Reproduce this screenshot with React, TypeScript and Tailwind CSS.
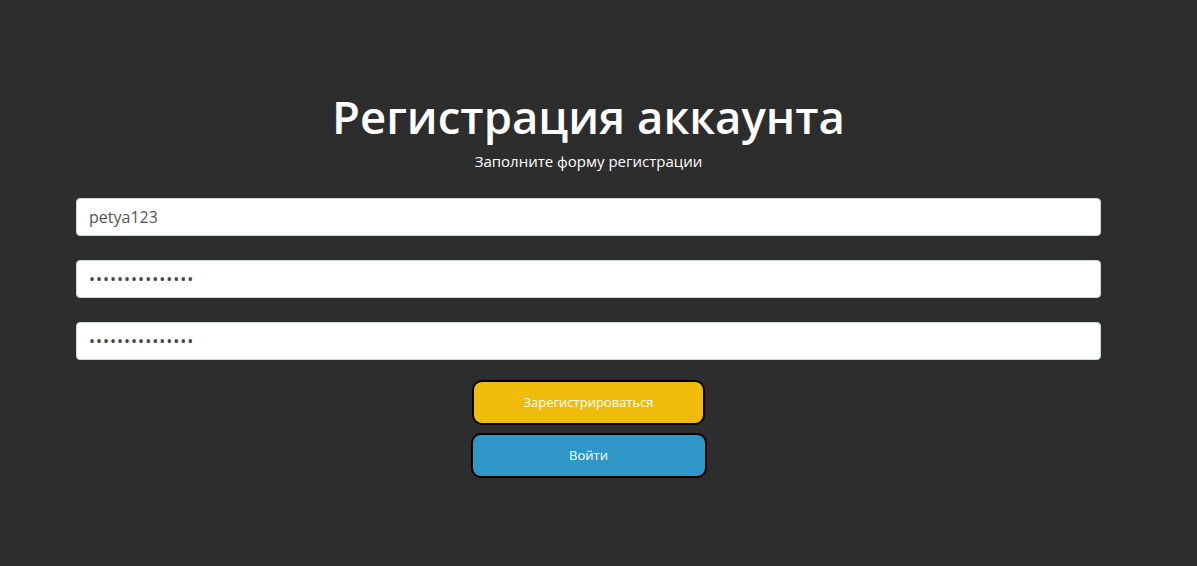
export default function App() {
  const font = { fontFamily: '"Open Sans", "Noto Sans", sans-serif' };
  return (
    <div className="min-h-[566px] w-full bg-[#2d2d2d]" style={font}>
      <div className="flex w-[1177px] flex-col items-center pt-[84px]">
        <h1 className="text-[45.5px] font-semibold leading-[64px] text-white">Регистрация аккаунта</h1>
        <p className="mt-[3px] text-[15px] leading-[20px] text-white">Заполните форму регистрации</p>
        <form className="mt-[27px] flex w-[1025px] flex-col gap-[24px]">
          <input
            type="text"
            defaultValue="petya123"
            className="h-[38px] w-full rounded-[4px] border border-[#ced4da] bg-white px-[12px] text-[16px] text-[#555]"
          />
          <input
            type="password"
            defaultValue="qwerty123456789"
            className="h-[38px] w-full rounded-[4px] border border-[#ced4da] bg-white px-[12px] text-[16px] tracking-[1px] text-[#444]"
          />
          <input
            type="password"
            defaultValue="qwerty123456789"
            className="h-[38px] w-full rounded-[4px] border border-[#ced4da] bg-white px-[12px] text-[16px] tracking-[1px] text-[#444]"
          />
        </form>
        <button
          type="button"
          className="mt-[20px] h-[45px] w-[233px] rounded-[10px] border-2 border-black bg-[#f0bc0c] text-[13px] font-medium text-white"
        >
          Зарегистрироваться
        </button>
        <button
          type="button"
          className="mt-[8px] h-[45px] w-[236px] rounded-[10px] border-2 border-black bg-[#2f97c7] text-[13px] font-medium text-white"
        >
          Войти
        </button>
      </div>
    </div>
  );
}
